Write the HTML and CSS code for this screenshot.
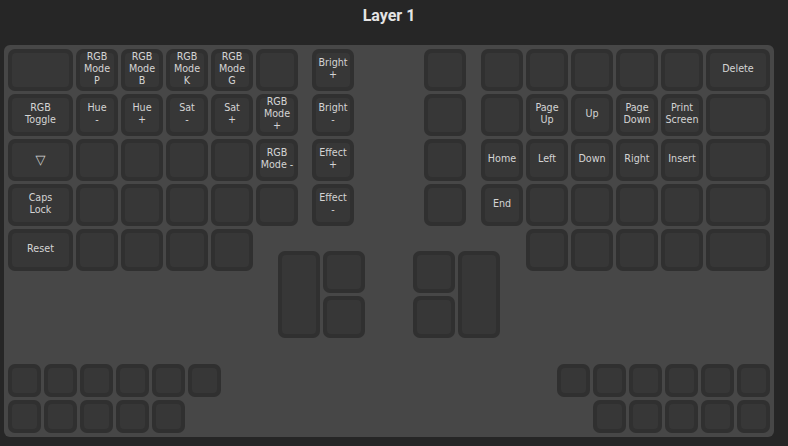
FILE: index.html
```html
<!DOCTYPE html>
<html>
<head>
<meta charset="utf-8">
<link rel="stylesheet" href="styles.css">
</head>
<body>
<div class="page">
  <header class="title">Layer 1</header>
  <section class="board">
    <div class="main">
      <div class="half">
        <div class="col wide">
          <div class="key"><div class="cap"></div></div>
          <div class="key"><div class="cap">RGB<br>Toggle</div></div>
          <div class="key"><div class="cap sym">▽</div></div>
          <div class="key"><div class="cap">Caps<br>Lock</div></div>
          <div class="key"><div class="cap">Reset</div></div>
        </div>
        <div class="col">
          <div class="key"><div class="cap">RGB<br>Mode<br>P</div></div>
          <div class="key"><div class="cap">Hue<br>-</div></div>
          <div class="key"><div class="cap"></div></div>
          <div class="key"><div class="cap"></div></div>
          <div class="key"><div class="cap"></div></div>
        </div>
        <div class="col">
          <div class="key"><div class="cap">RGB<br>Mode<br>B</div></div>
          <div class="key"><div class="cap">Hue<br>+</div></div>
          <div class="key"><div class="cap"></div></div>
          <div class="key"><div class="cap"></div></div>
          <div class="key"><div class="cap"></div></div>
        </div>
        <div class="col">
          <div class="key"><div class="cap">RGB<br>Mode<br>K</div></div>
          <div class="key"><div class="cap">Sat<br>-</div></div>
          <div class="key"><div class="cap"></div></div>
          <div class="key"><div class="cap"></div></div>
          <div class="key"><div class="cap"></div></div>
        </div>
        <div class="col">
          <div class="key"><div class="cap">RGB<br>Mode<br>G</div></div>
          <div class="key"><div class="cap">Sat<br>+</div></div>
          <div class="key"><div class="cap"></div></div>
          <div class="key"><div class="cap"></div></div>
          <div class="key"><div class="cap"></div></div>
        </div>
        <div class="block">
          <div class="inner-cols">
            <div class="col">
              <div class="key"><div class="cap"></div></div>
              <div class="key"><div class="cap">RGB<br>Mode<br>+</div></div>
              <div class="key"><div class="cap">RGB<br>Mode -</div></div>
              <div class="key"><div class="cap"></div></div>
            </div>
            <div class="col">
              <div class="key"><div class="cap">Bright<br>+</div></div>
              <div class="key"><div class="cap">Bright<br>-</div></div>
              <div class="key"><div class="cap">Effect<br>+</div></div>
              <div class="key"><div class="cap">Effect<br>-</div></div>
            </div>
          </div>
          <div class="thumb thumb-left">
            <div class="key tall"><div class="cap"></div></div>
            <div class="col">
              <div class="key"><div class="cap"></div></div>
              <div class="key"><div class="cap"></div></div>
            </div>
          </div>
        </div>
      </div>

      <div class="half">
        <div class="block">
          <div class="inner-cols inner-right">
            <div class="col">
              <div class="key"><div class="cap"></div></div>
              <div class="key"><div class="cap"></div></div>
              <div class="key"><div class="cap"></div></div>
              <div class="key"><div class="cap"></div></div>
            </div>
            <div class="col">
              <div class="key"><div class="cap"></div></div>
              <div class="key"><div class="cap"></div></div>
              <div class="key"><div class="cap">Home</div></div>
              <div class="key"><div class="cap">End</div></div>
            </div>
          </div>
          <div class="thumb">
            <div class="col">
              <div class="key"><div class="cap"></div></div>
              <div class="key"><div class="cap"></div></div>
            </div>
            <div class="key tall"><div class="cap"></div></div>
          </div>
        </div>
        <div class="col">
          <div class="key"><div class="cap"></div></div>
          <div class="key"><div class="cap">Page<br>Up</div></div>
          <div class="key"><div class="cap">Left</div></div>
          <div class="key"><div class="cap"></div></div>
          <div class="key"><div class="cap"></div></div>
        </div>
        <div class="col">
          <div class="key"><div class="cap"></div></div>
          <div class="key"><div class="cap">Up</div></div>
          <div class="key"><div class="cap">Down</div></div>
          <div class="key"><div class="cap"></div></div>
          <div class="key"><div class="cap"></div></div>
        </div>
        <div class="col">
          <div class="key"><div class="cap"></div></div>
          <div class="key"><div class="cap">Page<br>Down</div></div>
          <div class="key"><div class="cap">Right</div></div>
          <div class="key"><div class="cap"></div></div>
          <div class="key"><div class="cap"></div></div>
        </div>
        <div class="col">
          <div class="key"><div class="cap"></div></div>
          <div class="key"><div class="cap">Print<br>Screen</div></div>
          <div class="key"><div class="cap">Insert</div></div>
          <div class="key"><div class="cap"></div></div>
          <div class="key"><div class="cap"></div></div>
        </div>
        <div class="col wide wide-r">
          <div class="key"><div class="cap">Delete</div></div>
          <div class="key"><div class="cap"></div></div>
          <div class="key"><div class="cap"></div></div>
          <div class="key"><div class="cap"></div></div>
          <div class="key"><div class="cap"></div></div>
        </div>
      </div>
    </div>

    <div class="bottom">
      <div class="group">
        <div class="row">
          <div class="key small"><div class="cap"></div></div>
          <div class="key small"><div class="cap"></div></div>
          <div class="key small"><div class="cap"></div></div>
          <div class="key small"><div class="cap"></div></div>
          <div class="key small"><div class="cap"></div></div>
          <div class="key small"><div class="cap"></div></div>
        </div>
        <div class="row">
          <div class="key small"><div class="cap"></div></div>
          <div class="key small"><div class="cap"></div></div>
          <div class="key small"><div class="cap"></div></div>
          <div class="key small"><div class="cap"></div></div>
          <div class="key small"><div class="cap"></div></div>
        </div>
      </div>
      <div class="group group-right">
        <div class="row">
          <div class="key small"><div class="cap"></div></div>
          <div class="key small"><div class="cap"></div></div>
          <div class="key small"><div class="cap"></div></div>
          <div class="key small"><div class="cap"></div></div>
          <div class="key small"><div class="cap"></div></div>
          <div class="key small"><div class="cap"></div></div>
        </div>
        <div class="row">
          <div class="key small"><div class="cap"></div></div>
          <div class="key small"><div class="cap"></div></div>
          <div class="key small"><div class="cap"></div></div>
          <div class="key small"><div class="cap"></div></div>
          <div class="key small"><div class="cap"></div></div>
        </div>
      </div>
    </div>
  </section>
</div>
</body>
</html>
```

FILE: styles.css
```css
html, body {
  margin: 0;
  padding: 0;
  background: #262626;
}

.page {
  width: 770px;
  margin-left: 4px;
}

.title {
  height: 45px;
  box-sizing: border-box;
  padding-top: 6px;
  text-align: center;
  font-family: Roboto, "Liberation Sans", sans-serif;
  font-weight: 700;
  font-size: 16px;
  line-height: 19px;
  color: #e4e4e4;
}

.board {
  background: #474747;
  border-radius: 6px;
  padding: 4px;
  display: flex;
  flex-direction: column;
}

.main {
  display: flex;
  justify-content: space-between;
  align-items: flex-start;
}

.half {
  display: flex;
  gap: 3px;
  align-items: flex-start;
}

.col {
  display: flex;
  flex-direction: column;
  gap: 3px;
}

.block {
  display: flex;
  flex-direction: column;
  align-items: flex-start;
}

.inner-cols {
  display: flex;
  gap: 14px;
}

.inner-right {
  margin-left: 11px;
  gap: 15px;
}

.thumb {
  display: flex;
  gap: 3px;
  margin-top: 25px;
}

.thumb-left {
  margin-left: 22px;
}

.key {
  width: 42px;
  height: 42px;
  box-sizing: border-box;
  padding: 4px;
  background: #303030;
  border-radius: 7px;
  display: flex;
}

.wide .key {
  width: 65px;
}

.wide-r .key {
  width: 64px;
}

.key.tall {
  height: 87px;
}

.key.small {
  width: 33px;
  height: 33px;
}

.cap {
  flex: 1;
  background: #373737;
  border-radius: 4px;
  display: flex;
  align-items: center;
  justify-content: center;
  text-align: center;
  white-space: nowrap;
  font-family: "DejaVu Sans", "Open Sans", sans-serif;
  font-size: 9.6px;
  line-height: 11.7px;
  color: #d4d4d4;
  padding-bottom: 2px;
}

.cap.sym {
  font-size: 13px;
  line-height: 15px;
}

.bottom {
  margin-top: 26px;
  display: flex;
  justify-content: space-between;
}

.group {
  display: flex;
  flex-direction: column;
  gap: 3px;
}

.group-right {
  align-items: flex-end;
}

.row {
  display: flex;
  gap: 3px;
}
```
